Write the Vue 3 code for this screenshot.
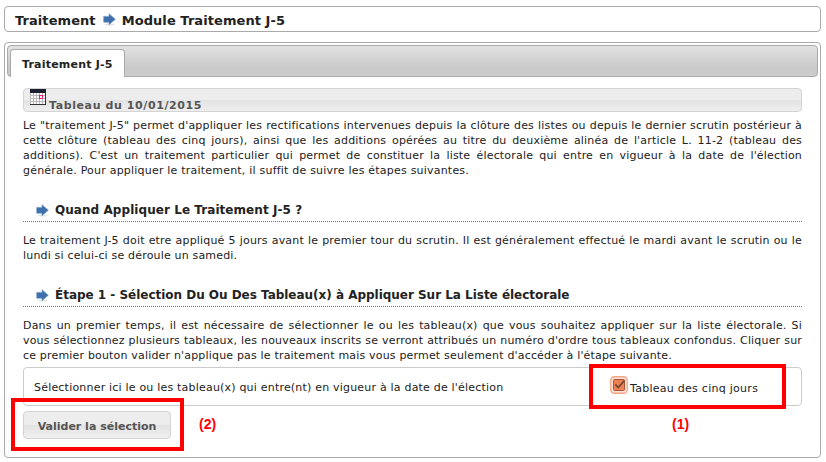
<script setup>
import { h } from 'vue'

const intro = [
  'Le "traitement J-5" permet d\'appliquer les rectifications intervenues depuis la clôture des listes ou depuis le dernier scrutin postérieur à',
  "cette clôture (tableau des cinq jours), ainsi que les additions opérées au titre du deuxième alinéa de l'article L. 11-2 (tableau des",
  "additions). C'est un traitement particulier qui permet de constituer la liste électorale qui entre en vigueur à la date de l'élection",
  'générale. Pour appliquer le traitement, il suffit de suivre les étapes suivantes.',
]
const when = [
  'Le traitement J-5 doit etre appliqué 5 jours avant le premier tour du scrutin. Il est généralement effectué le mardi avant le scrutin ou le',
  'lundi si celui-ci se déroule un samedi.',
]
const step = [
  'Dans un premier temps, il est nécessaire de sélectionner le ou les tableau(x) que vous souhaitez appliquer sur la liste électorale. Si',
  "vous sélectionnez plusieurs tableaux, les nouveaux inscrits se verront attribués un numéro d'ordre tous tableaux confondus. Cliquer sur",
  "ce premier bouton valider n'applique pas le traitement mais vous permet seulement d'accéder à l'étape suivante.",
]

const Arrow = () =>
  h('svg', { width: 13, height: 13, viewBox: '0 0 13 13' }, [
    h('ellipse', { cx: 6.5, cy: 11.6, rx: 5, ry: 1.1, fill: '#e4e6e9' }),
    h('path', { d: 'M.7 3.4H6V.7L12.3 6.2 6 11.7V9.2H.7Z', fill: '#3e70ad', stroke: '#6f94c0', 'stroke-width': 0.6 }),
  ])
</script>

<template>
  <div class="page">
    <header class="crumbs">
      <span>Traitement</span>
      <Arrow class="arrow" />
      <span>Module Traitement J-5</span>
    </header>

    <main class="panel">
      <nav class="tabs"><div class="tab">Traitement J-5</div></nav>
      <div class="content">
        <div class="banner">
          <svg class="calendar" width="16" height="16" viewBox="0 0 16 16" shape-rendering="crispEdges">
            <rect width="16" height="16" fill="#b9b9b9" />
            <g fill="#fff">
              <template v-for="r in 4" :key="r">
                <rect v-for="c in 5" :key="c" :x="c * 3 - 2" :y="r * 3 + 1" width="2" height="2" />
              </template>
            </g>
            <path d="M0 0H16V4H0Z" fill="#1a2030" />
            <path d="M15 4H16V16H15ZM0 15H16V16H0Z" fill="#333" />
            <path d="M9 6H13V10H9Z" fill="#f0207a" />
            <path d="M10 7H12V9H10Z" fill="#fff" />
          </svg>
          <span>Tableau du 10/01/2015</span>
        </div>
        <p class="text"><span v-for="l in intro" :key="l">{{ l }}</span></p>

        <h2 class="heading"><Arrow class="arrow" /><span>Quand Appliquer Le Traitement J-5 ?</span></h2>
        <p class="text"><span v-for="l in when" :key="l">{{ l }}</span></p>

        <h2 class="heading second"><Arrow class="arrow" /><span>Étape 1 - Sélection Du Ou Des Tableau(x) à Appliquer Sur La Liste électorale</span></h2>
        <p class="text"><span v-for="l in step" :key="l">{{ l }}</span></p>

        <div class="field">
          <span class="label">Sélectionner ici le ou les tableau(x) qui entre(nt) en vigueur à la date de l'élection</span>
          <div class="choice">
            <svg class="check" width="18" height="18" viewBox="0 0 18 18">
              <rect x=".75" y=".75" width="16.5" height="16.5" rx="3.5" fill="#fbe3d8" stroke="#f3a587" stroke-width="1.3" />
              <rect x="3.5" y="3.5" width="11" height="11" rx="1" fill="#f08055" stroke="#a95636" />
              <path d="M5.3 8.4L8.2 11.5 14.5 4.5" fill="none" stroke="#704634" stroke-width="1.8" />
            </svg>
            <span>Tableau des cinq jours</span>
            <div class="mark mark-choice"></div>
            <b class="note note-one">(1)</b>
          </div>
        </div>
        <div class="actions">
          <button class="submit">Valider la sélection</button>
          <div class="mark mark-submit"></div>
          <b class="note note-two">(2)</b>
        </div>
      </div>
    </main>
  </div>
</template>

<style>
body { background: #fff; }
</style>
<style scoped>
* { box-sizing: border-box; }
.page {
  width: 826px;
  height: 462px;
  padding: 6px 5px 0 4px;
  overflow: hidden;
  font-family: "DejaVu Sans", sans-serif;
  font-size: 11px;
  color: #222;
}
.crumbs {
  display: flex;
  align-items: center;
  height: 26px;
  padding: 3px 10px 0;
  border: 1px solid #aaa;
  border-radius: 4px;
  font-size: 13px;
  font-weight: bold;
  letter-spacing: .07px;
  white-space: nowrap;
}
.crumbs .arrow { margin: -2px 6px 0 7px; }
.arrow { flex: none; }
.panel {
  height: 416px;
  margin-top: 10px;
  padding: 2px;
  border: 1px solid #aaa;
  border-radius: 4px;
}
.tabs {
  height: 32px;
  padding: 3px 0 0 2px;
  border: 1px solid #aaa;
  border-radius: 4px;
  background: linear-gradient(#e2e2e2, #c9c9c9 75%, #cdcdcd);
}
.tab {
  width: 115px;
  height: 28px;
  padding: 8px 0 0 11px;
  border: 1px solid #aaa;
  border-bottom: 0;
  border-radius: 4px 4px 0 0;
  background: #fff;
  font-weight: bold;
  line-height: 13px;
  letter-spacing: .2px;
  white-space: nowrap;
}
.content { padding: 11px 16px 0; }
.banner {
  display: flex;
  height: 24px;
  padding-left: 6px;
  border: 1px solid #d3d3d3;
  border-radius: 4px;
  background: linear-gradient(#ededed 0 50%, #e3e3e3 52%, #efefef);
  color: #555;
  font-weight: bold;
}
.banner span { padding: 10px 0 0 3px; line-height: 13px; letter-spacing: .6px; }
.text { margin: 0; line-height: 15px; letter-spacing: .18px; }
.banner + .text { margin-top: 6px; }
.text span {
  display: block;
  white-space: nowrap;
  text-align: justify;
  text-align-last: justify;
}
.text span:last-child { text-align-last: left; }
.banner + .text span:last-child { letter-spacing: .21px; }
.heading {
  display: flex;
  align-items: center;
  height: 20px;
  margin: 24px 0 11px;
  padding: 0 0 3px 13px;
  border-bottom: 1px dotted #777;
  font-size: 12px;
  line-height: 15px;
  letter-spacing: .06px;
  white-space: nowrap;
}
.heading.second { letter-spacing: -.02px; }
.heading .arrow { margin-right: 6px; }
.field {
  display: flex;
  height: 39px;
  margin-top: 4px;
  border: 1px solid #ccc;
  border-radius: 4px;
}
.label { width: 586px; padding: 12px 0 0 10px; line-height: 15px; letter-spacing: .2px; white-space: nowrap; }
.choice { position: relative; display: flex; white-space: nowrap; }
.check { margin-top: 8px; }
.choice span { padding: 13px 0 0 2px; line-height: 15px; letter-spacing: .27px; }
.actions { position: relative; margin-top: 5px; }
.submit {
  display: block;
  width: 148px;
  height: 28px;
  padding: 2px 0 0;
  border: 1px solid #d3d3d3;
  border-radius: 4px;
  background: linear-gradient(#ededed 0 50%, #e3e3e3 52%, #efefef);
  color: #555;
  font: bold 11px "DejaVu Sans", sans-serif;
}
.mark { position: absolute; border: 4px solid #f00; }
.mark-choice { left: -21px; top: -4px; width: 197px; height: 45px; }
.mark-submit { left: -12px; top: -13px; width: 173px; height: 53px; }
.note { position: absolute; color: #f00; font: bold 14px/16px "Liberation Sans", sans-serif; }
.note-one { left: 62px; top: 48px; }
.note-two { left: 176px; top: 5px; }
</style>
